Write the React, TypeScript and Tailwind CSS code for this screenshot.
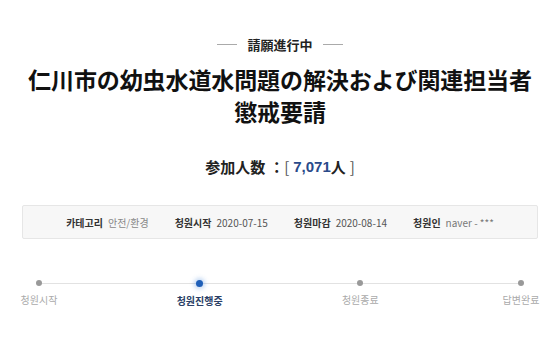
import React from "react";

const jp = { fontFamily: '"Noto Sans CJK JP", "Noto Sans", sans-serif' };
const kr = { fontFamily: '"Noto Sans CJK KR", "Noto Sans", sans-serif' };

export default function App() {
  const steps = [
    { label: "청원시작", active: false },
    { label: "청원진행중", active: true },
    { label: "청원종료", active: false },
    { label: "답변완료", active: false },
  ];
  return (
    <div className="w-[560px] h-[340px] bg-white overflow-hidden flex flex-col items-center" style={jp}>
      <div className="mt-[35px] flex items-center gap-[10px] h-[18px]">
        <div className="w-[20px] h-px bg-[#aaaaaa]" />
        <span className="text-[13px] font-bold text-[#222] leading-none">請願進行中</span>
        <div className="w-[20px] h-px bg-[#aaaaaa]" />
      </div>
      <div className="mt-[10px] text-[23px] font-bold text-[#111] leading-[32px] text-center tracking-[-0.1px]">
        <div>仁川市の幼虫水道水問題の解決および関連担当者</div>
        <div>懲戒要請</div>
      </div>
      <div className="mt-[28px] flex items-center h-[24px] text-[15px] font-bold text-[#222]">
        <span>参加人数</span>
        <span className="ml-[4px]">：</span>
        <span className="font-normal text-[#555]">[</span>
        <span className="ml-[4px] text-[#2a4a8a]" style={{ fontFamily: '"Liberation Sans", sans-serif' }}>7,071</span>
        <span className="text-[#222]">人</span>
        <span className="ml-[4px] font-normal text-[#555]">]</span>
      </div>
      <div className="mt-[26px] w-[516px] h-[34px] bg-[#f7f7f7] border border-[#e6e6e6] rounded-[2px] flex items-center justify-center gap-[26px] text-[10px]" style={kr}>
        <div className="flex items-center gap-[5px]">
          <span className="font-bold text-[#333]">카테고리</span>
          <span className="text-[#888]">안전/환경</span>
        </div>
        <div className="flex items-center gap-[5px]">
          <span className="font-bold text-[#333]">청원시작</span>
          <span className="text-[#555]">2020-07-15</span>
        </div>
        <div className="flex items-center gap-[5px]">
          <span className="font-bold text-[#333]">청원마감</span>
          <span className="text-[#555]">2020-08-14</span>
        </div>
        <div className="flex items-center gap-[5px]">
          <span className="font-bold text-[#333]">청원인</span>
          <span className="text-[#777]">naver - ***</span>
        </div>
      </div>
      <div className="mt-[41px] w-[522px] relative" style={kr}>
        <div className="absolute left-[20px] right-[20px] top-[3px] h-px bg-[#e2e2e2]" />
        <div className="relative flex justify-between">
          {steps.map((s) => (
            <div key={s.label} className="w-[40px] flex flex-col items-center">
              {s.active ? (
                <div className="w-[7px] h-[7px] rounded-full bg-[#1f5fb8] shadow-[0_0_4px_2px_rgba(80,140,220,0.35)]" />
              ) : (
                <div className="w-[6px] h-[6px] rounded-full bg-[#999]" />
              )}
              <span
                className={
                  "mt-[9px] whitespace-nowrap text-[10px] leading-none " +
                  (s.active ? "font-bold text-[#2b3f66]" : "text-[#aaa]")
                }
              >
                {s.label}
              </span>
            </div>
          ))}
        </div>
      </div>
    </div>
  );
}
